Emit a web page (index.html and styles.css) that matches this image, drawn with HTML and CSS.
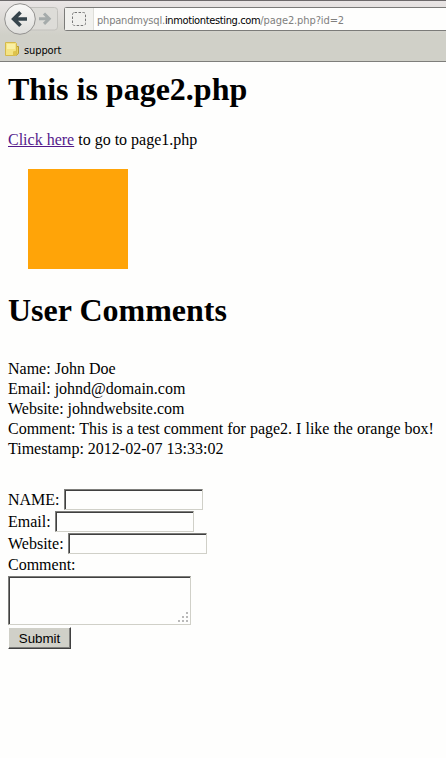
FILE: index.html
```html
<!DOCTYPE html>
<html lang="en">
<head>
<meta charset="utf-8">
<title>page2.php</title>
<link rel="stylesheet" href="styles.css">
</head>
<body>
<header class="chrome">
  <div class="toolbar">
    <svg class="nav" width="60" height="34" viewBox="0 0 60 34">
      <defs>
        <linearGradient id="face" x1="0" y1="0" x2="0" y2="1"><stop offset="0" stop-color="#faf9f8"/><stop offset="1" stop-color="#dededb"/></linearGradient>
      </defs>
      <path d="M30 5.500h24.500q3 0 3 3v16.500q0 3-3 3h-24.500z" fill="#dddcd8" stroke="#c2c1bd"/>
      <path d="M39 16.700h9M44 11.500l5.200 5.200-5.200 5.200" fill="none" stroke="#a5abab" stroke-width="3"/>
      <circle cx="20" cy="17" r="15.300" fill="url(#face)" stroke="#92918f"/>
      <path d="M27 17h-12M20.500 10.200l-6.800 6.800 6.800 6.800" fill="none" stroke="#36444c" stroke-width="3.700"/>
    </svg>
    <div class="address">
      <div class="identity"><svg width="15" height="15" viewBox="0 0 15 15"><rect x=".5" y=".5" width="13" height="13" rx="2" fill="none" stroke="#777" stroke-dasharray="2.500 1.500"/></svg></div>
      <div class="url"><span class="sub">phpandmysql.</span><span class="domain">inmotiontesting.com</span><span class="path">/page2.php?id=2</span></div>
    </div>
  </div>
  <div class="bookmarks">
    <svg width="15" height="16" viewBox="0 0 15 16">
      <path d="M11 5.500h2.500v7l-2.500 2" fill="#ead35c" stroke="#b89b32"/>
      <path d="M.5 1.500h10l1 1v11l-1 1h-10z" fill="#f4e383" stroke="#d5b94c"/>
      <path d="M2 3h8v5h-8z" fill="#faf0a5"/>
      <path d="M8 14.500v-4l3.500-1v5z" fill="#dec34d"/>
    </svg>
    <span class="bookmark-name">support</span>
  </div>
</header>
<main>
  <h1>This is page2.php</h1>
  <p class="intro"><a href="#">Click here</a> to go to page1.php</p>
  <div class="box"></div>
  <h1 class="comments-title">User Comments</h1>
  <div class="comment">Name: John Doe<br>Email: johnd@domain.com<br>Website: johndwebsite.com<br>Comment: This is a test comment for page2. I like the orange box!<br>Timestamp: 2012-02-07 13:33:02</div>
  <form>
    <label class="field">NAME: <input type="text"></label>
    <label class="field">Email: <input type="text"></label>
    <label class="field">Website: <input type="text"></label>
    <label class="message">Comment:
      <span class="area"><textarea></textarea>
        <svg class="grip" width="10" height="10" viewBox="0 0 10 10" fill="#b9b9b9"><path d="M8 0h2v2h-2zM8 4h2v2h-2zM4 4h2v2h-2zM8 8h2v2h-2zM4 8h2v2h-2zM0 8h2v2h-2z"/></svg>
      </span>
    </label>
    <button type="button">Submit</button>
  </form>
</main>
</body>
</html>
```
FILE: styles.css
```css
* { box-sizing: border-box; }
body {
  margin: 0;
  background: #fefefd;
  color: #000;
  font: 16px/20px "Liberation Serif", serif;
  overflow: hidden;
}
.chrome {
  height: 62px;
  border-top: 1px solid #6c696a;
  border-bottom: 1px solid #7e7e7b;
  background: linear-gradient(#e9e5e5, #d0d0c8 34px);
  font: 11px/14px "DejaVu Sans Condensed", "DejaVu Sans", sans-serif;
}
.toolbar { display: flex; height: 35px; padding-top: 1px; }
.nav { flex: none; }
.address {
  display: flex;
  flex: 1;
  height: 24px;
  margin: 5px 0 0 4px;
  border: 1px solid #7b7b79;
  border-right: 0;
  border-radius: 3px 0 0 3px;
  background: #fefefd;
}
.identity {
  width: 29px;
  padding: 4px 0 0 7px;
  background: #f1f1ee;
  border-right: 1px solid #deded9;
}
.url { padding: 6px 0 0 3px; white-space: nowrap; color: #80807e; }
.sub { letter-spacing: -.2px; }
.domain { color: #000; letter-spacing: -.36px; }
.path { letter-spacing: -.1px; }
.bookmarks {
  display: flex;
  align-items: center;
  gap: 4px;
  height: 25px;
  padding: 1px 0 0 5px;
}
.bookmark-name { padding-top: 3px; letter-spacing: -.1px; }
main { padding: 9px 8px 0; }
h1 { margin: 0; font-size: 32px; line-height: 36px; }
.intro { margin: 23px 0 19px; }
a { color: #551a8b; }
.box { width: 100px; height: 100px; margin-left: 20px; background: #ffa408; }
.comments-title { margin-top: 23px; }
.comment { margin-top: 31px; white-space: nowrap; }
form { margin-top: 30px; }
.field { display: flex; align-items: flex-start; gap: 4px; height: 22px; line-height: 22px; }
input, textarea {
  margin: 0;
  padding: 0;
  border: 1px solid;
  border-color: #7e7e7b #d0d0c8 #d0d0c8 #7e7e7b;
  background: #fefefd;
  box-shadow: inset 1px 1px #404040;
}
input { width: 139px; height: 21px; }
.message { display: block; }
.area { display: block; position: relative; width: 183px; height: 49px; margin-top: 1px; }
textarea { display: block; width: 183px; height: 49px; resize: none; }
.grip { position: absolute; right: 3px; bottom: 3px; }
button {
  display: block;
  width: 63px;
  height: 22px;
  margin-top: 2px;
  padding: 1px 0 0;
  border: 1px solid;
  border-color: #fefefd #404040 #404040 #fefefd;
  border-radius: 0;
  box-shadow: inset -1px -1px #7e7e7b;
  background: #d0d0c8;
  color: #000;
  font: 13.333px/18px "Liberation Sans", sans-serif;
}
```
